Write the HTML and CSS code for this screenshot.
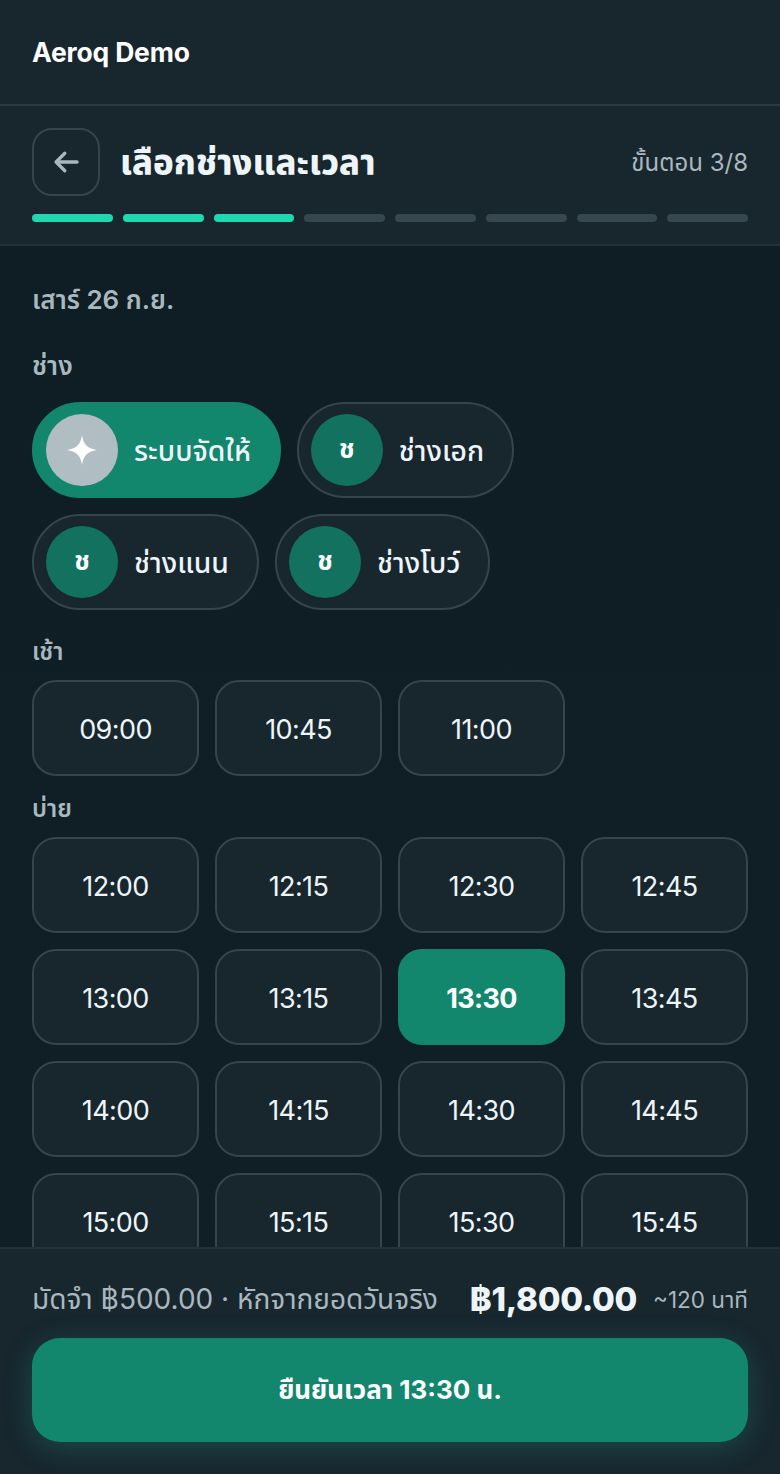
FILE: index.html
```html
<!DOCTYPE html>
<html lang="th">
<head>
    <meta charset="UTF-8">
    <meta name="viewport" content="width=device-width, initial-scale=1.0">
    <title>Aeroq Demo</title>
    <link rel="stylesheet" href="styles.css">
</head>
<body>
    <div class="app">
        <!-- Brand bar -->
        <header class="brand">Aeroq Demo</header>

        <!-- Step header -->
        <section class="step">
            <div class="step-top">
                <button class="back" aria-label="ย้อนกลับ">
                    <svg width="28" height="28" viewBox="0 0 24 24" fill="none" stroke="currentColor" stroke-width="2.8" stroke-linecap="round" stroke-linejoin="round">
                        <path d="M21.5 12H4"/>
                        <path d="M11 4.5 3.5 12l7.5 7.5"/>
                    </svg>
                </button>
                <h1>เลือกช่างและเวลา</h1>
                <span class="step-count">ขั้นตอน 3/8</span>
            </div>
            <div class="progress">
                <span class="bar on"></span>
                <span class="bar on"></span>
                <span class="bar on"></span>
                <span class="bar"></span>
                <span class="bar"></span>
                <span class="bar"></span>
                <span class="bar"></span>
                <span class="bar"></span>
            </div>
        </section>

        <!-- Page content -->
        <main class="content">
            <p class="date">เสาร์ 26 ก.ย.</p>
            <h2 class="label">ช่าง</h2>
            <div class="staff">
                <button class="pill active">
                    <span class="avatar auto">
                        <svg width="30" height="30" viewBox="0 0 24 24" fill="#fff"><path d="M12 0c1 7 4 11 12 12-8 1-11 5-12 12-1-7-4-11-12-12 8-1 11-5 12-12z"/></svg>
                    </span>
                    <span class="pill-name">ระบบจัดให้</span>
                </button>
                <button class="pill"><span class="avatar">ช</span><span class="pill-name">ช่างเอก</span></button>
                <button class="pill"><span class="avatar">ช</span><span class="pill-name">ช่างแนน</span></button>
                <button class="pill"><span class="avatar">ช</span><span class="pill-name">ช่างโบว์</span></button>
            </div>

            <h3 class="period">เช้า</h3>
            <div class="slots">
                <button class="slot">09:00</button>
                <button class="slot">10:45</button>
                <button class="slot">11:00</button>
            </div>

            <h3 class="period">บ่าย</h3>
            <div class="slots">
                <button class="slot">12:00</button>
                <button class="slot">12:15</button>
                <button class="slot">12:30</button>
                <button class="slot">12:45</button>
                <button class="slot">13:00</button>
                <button class="slot">13:15</button>
                <button class="slot active">13:30</button>
                <button class="slot">13:45</button>
                <button class="slot">14:00</button>
                <button class="slot">14:15</button>
                <button class="slot">14:30</button>
                <button class="slot">14:45</button>
                <button class="slot">15:00</button>
                <button class="slot">15:15</button>
                <button class="slot">15:30</button>
                <button class="slot">15:45</button>
            </div>
        </main>

        <!-- Summary and confirm -->
        <footer class="summary">
            <div class="summary-row">
                <span class="deposit">มัดจำ ฿500.00 · หักจากยอดวันจริง</span>
                <span class="total">฿1,800.00</span>
                <span class="duration">~120 นาที</span>
            </div>
            <button class="confirm">ยืนยันเวลา 13:30 น.</button>
        </footer>
    </div>
</body>
</html>
```

FILE: styles.css
```css
/* Global Reset */
* {
    margin: 0;
    padding: 0;
    box-sizing: border-box;
}

body {
    font-family: 'Inter', 'Noto Sans', 'Noto Sans Thai', sans-serif;
    background-color: #0f1d24;
    color: #eef5f8;
}

button {
    font-family: inherit;
    color: inherit;
    cursor: pointer;
}

.app {
    height: 1474px;
    display: flex;
    flex-direction: column;
    overflow: hidden;
}

/* Brand bar */
.brand {
    height: 106px;
    flex: none;
    padding: 0 32px;
    display: flex;
    align-items: center;
    font-size: 26.5px;
    font-weight: 700;
    letter-spacing: -0.2px;
    color: #fff;
    background-color: #18262e;
    border-bottom: 2px solid #2a3942;
}

/* Step header */
.step {
    height: 140px;
    flex: none;
    padding: 22px 32px 0;
    background-color: #18262e;
    border-bottom: 2px solid #22313a;
}

.step-top {
    display: flex;
    align-items: center;
    gap: 20px;
}

.back {
    width: 68px;
    height: 68px;
    display: flex;
    align-items: center;
    justify-content: center;
    background: none;
    border: 2px solid #36454d;
    border-radius: 20px;
    color: #a9b8bf;
}

h1 {
    flex: 1;
    padding-top: 4px;
    font-size: 34.6px;
    font-weight: 800;
    color: #eef5f8;
}

.step-count {
    padding-top: 4px;
    font-size: 24px;
    color: #a9b8bf;
}

.progress {
    display: flex;
    gap: 10px;
    margin-top: 18px;
}

.bar {
    flex: 1;
    height: 8px;
    border-radius: 4px;
    background-color: #36474f;
}

.bar.on {
    background-color: #1fd8b0;
}

/* Content */
.content {
    flex: 1;
    min-height: 0;
    overflow: hidden;
    padding: 35px 32px 0;
    background-image: linear-gradient(#0f1d24, #101e25);
}

.date {
    font-size: 26px;
    font-weight: 600;
    color: #a9b8bf;
    line-height: 38px;
}

.label {
    margin-top: 28px;
    font-size: 26px;
    font-weight: 600;
    color: #a9b8bf;
    line-height: 38px;
}

/* Staff pills */
.staff {
    display: flex;
    flex-wrap: wrap;
    gap: 16px;
    margin-top: 17px;
    margin-bottom: 24px;
}

.pill {
    height: 96px;
    display: flex;
    align-items: center;
    gap: 16px;
    padding: 0 28px 0 12px;
    font-size: 28.3px;
    font-weight: 500;
    background-color: #18262e;
    border: 2px solid #36454d;
    border-radius: 48px;
}

.pill-name {
    padding-top: 4px;
}

.pill.active {
    background-color: #13866e;
    border-color: #13866e;
}

.avatar {
    width: 72px;
    height: 72px;
    display: flex;
    align-items: center;
    justify-content: center;
    flex: none;
    border-radius: 50%;
    background-color: #12715f;
    font-size: 26px;
    font-weight: 700;
    color: #fff;
}

.avatar.auto {
    background-color: #b0bdc3;
}

/* Time slots */
.period {
    margin-top: 15px;
    font-size: 24px;
    font-weight: 600;
    color: #a9b8bf;
    line-height: 36px;
}

.slots {
    display: grid;
    grid-template-columns: repeat(4, 1fr);
    gap: 16px;
    margin-top: 10px;
}

.slot {
    height: 96px;
    padding-top: 2px;
    font-size: 27px;
    font-weight: 400;
    letter-spacing: -0.6px;
    background-color: #18262e;
    border: 2px solid #36454d;
    border-radius: 24px;
}

.slot.active {
    font-weight: 700;
    color: #fff;
    background-color: #13866e;
    border-color: #13866e;
}

/* Summary */
.summary {
    flex: none;
    height: 227px;
    padding: 0 32px;
    position: relative;
    background-color: #18262e;
    border-top: 2px solid #22313a;
}

.summary-row {
    height: 89px;
    padding-top: 14px;
    display: flex;
    align-items: center;
}

.deposit {
    flex: 1;
    font-size: 28px;
    color: #a9b8bf;
}

.total {
    margin-top: -4px;
    font-size: 33px;
    font-weight: 800;
    letter-spacing: -0.3px;
    color: #eef5f8;
}

.duration {
    margin-left: 16px;
    font-size: 22.5px;
    color: #a9b8bf;
}

.confirm {
    display: block;
    width: 100%;
    height: 104px;
    padding-top: 2px;
    font-size: 26px;
    font-weight: 700;
    color: #fff;
    background-color: #13866e;
    border: none;
    border-radius: 28px;
    box-shadow: 0 6px 30px rgba(31, 216, 176, 0.22);
}
```
